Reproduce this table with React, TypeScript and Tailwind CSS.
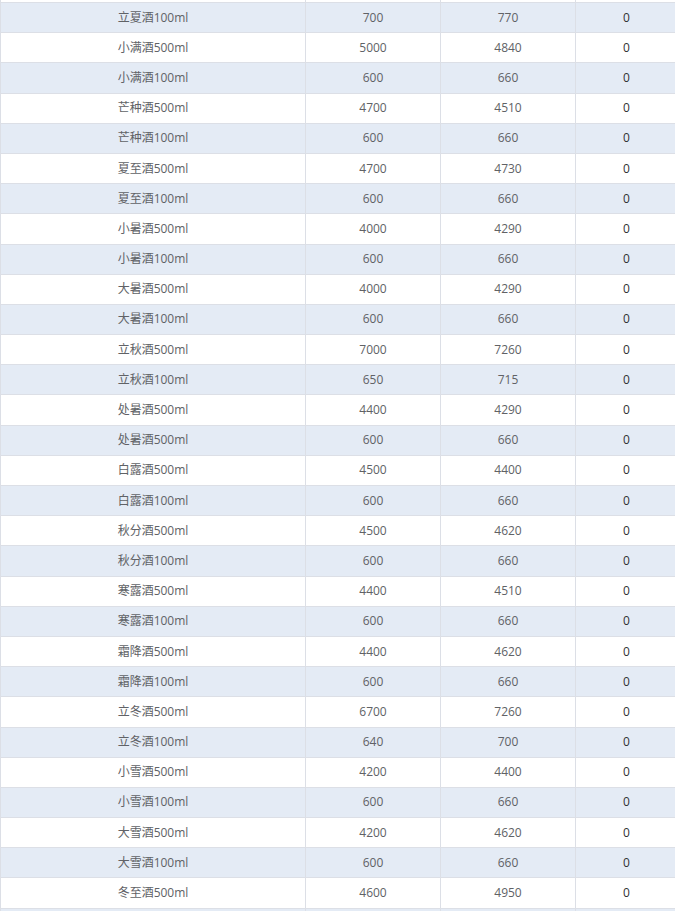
type Row = { name: string; cost: number | string; price: number | string; stock: number | string };

const rows: Row[] = [
  { name: "", cost: "", price: "", stock: "" },
  { name: "立夏酒100ml", cost: 700, price: 770, stock: 0 },
  { name: "小满酒500ml", cost: 5000, price: 4840, stock: 0 },
  { name: "小满酒100ml", cost: 600, price: 660, stock: 0 },
  { name: "芒种酒500ml", cost: 4700, price: 4510, stock: 0 },
  { name: "芒种酒100ml", cost: 600, price: 660, stock: 0 },
  { name: "夏至酒500ml", cost: 4700, price: 4730, stock: 0 },
  { name: "夏至酒100ml", cost: 600, price: 660, stock: 0 },
  { name: "小暑酒500ml", cost: 4000, price: 4290, stock: 0 },
  { name: "小暑酒100ml", cost: 600, price: 660, stock: 0 },
  { name: "大暑酒500ml", cost: 4000, price: 4290, stock: 0 },
  { name: "大暑酒100ml", cost: 600, price: 660, stock: 0 },
  { name: "立秋酒500ml", cost: 7000, price: 7260, stock: 0 },
  { name: "立秋酒100ml", cost: 650, price: 715, stock: 0 },
  { name: "处暑酒500ml", cost: 4400, price: 4290, stock: 0 },
  { name: "处暑酒500ml", cost: 600, price: 660, stock: 0 },
  { name: "白露酒500ml", cost: 4500, price: 4400, stock: 0 },
  { name: "白露酒100ml", cost: 600, price: 660, stock: 0 },
  { name: "秋分酒500ml", cost: 4500, price: 4620, stock: 0 },
  { name: "秋分酒100ml", cost: 600, price: 660, stock: 0 },
  { name: "寒露酒500ml", cost: 4400, price: 4510, stock: 0 },
  { name: "寒露酒100ml", cost: 600, price: 660, stock: 0 },
  { name: "霜降酒500ml", cost: 4400, price: 4620, stock: 0 },
  { name: "霜降酒100ml", cost: 600, price: 660, stock: 0 },
  { name: "立冬酒500ml", cost: 6700, price: 7260, stock: 0 },
  { name: "立冬酒100ml", cost: 640, price: 700, stock: 0 },
  { name: "小雪酒500ml", cost: 4200, price: 4400, stock: 0 },
  { name: "小雪酒100ml", cost: 600, price: 660, stock: 0 },
  { name: "大雪酒500ml", cost: 4200, price: 4620, stock: 0 },
  { name: "大雪酒100ml", cost: 600, price: 660, stock: 0 },
  { name: "冬至酒500ml", cost: 4600, price: 4950, stock: 0 },
  { name: "", cost: "", price: "", stock: "" },
];

const cell =
  "flex h-full items-center justify-center border-r border-[#dcdfe6]";

export default function App() {
  return (
    <div className="h-[911px] w-[675px] overflow-hidden bg-white font-['Open_Sans','Noto_Sans_CJK_SC',sans-serif] text-[12px] text-[#606266]">
      <div className="-mt-[27.2px] w-[677px] border-l border-[#dcdfe6]">
        {rows.map((row, i) => (
          <div
            key={i}
            className={
              i % 2 === 1
                ? "grid h-[30.2px] grid-cols-[305px_135px_135px_101px] border-b border-[#dcdfe6] bg-[#e4ebf5]"
                : "grid h-[30.2px] grid-cols-[305px_135px_135px_101px] border-b border-[#dcdfe6] bg-white"
            }
          >
            <div className={cell}>{row.name}</div>
            <div className={cell}>{row.cost}</div>
            <div className={cell}>{row.price}</div>
            <div className="flex h-full items-center justify-center text-[#303133]">
              {row.stock}
            </div>
          </div>
        ))}
      </div>
    </div>
  );
}
